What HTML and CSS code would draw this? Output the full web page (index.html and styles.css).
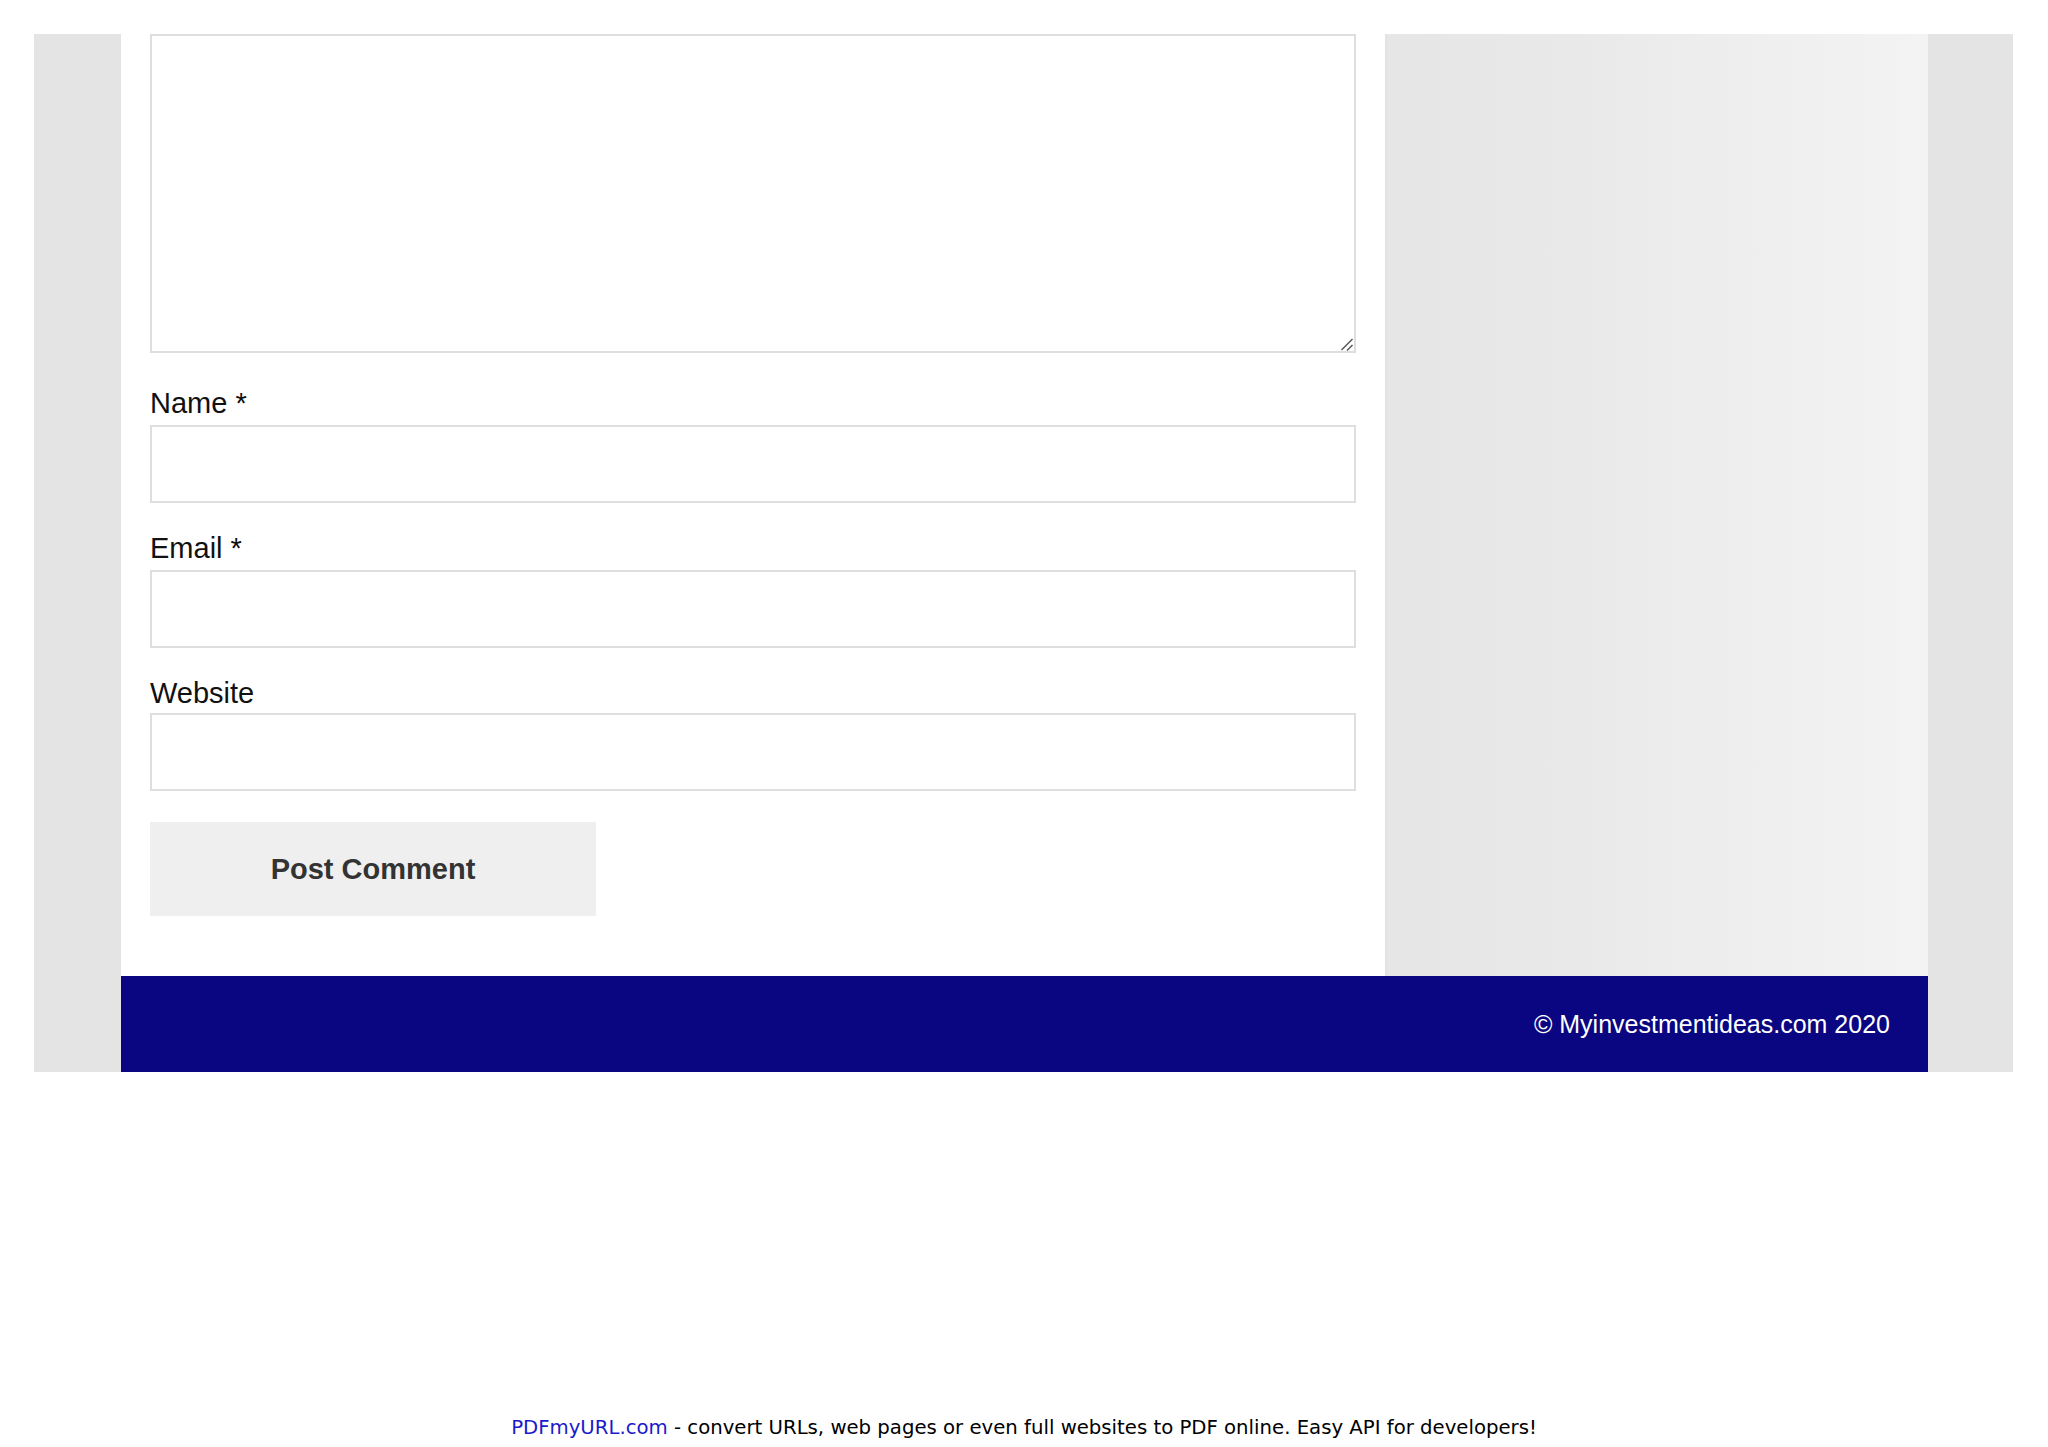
FILE: index.html
```html
<!DOCTYPE html>
<html lang="en">
<head>
<meta charset="utf-8">
<title>Leave a comment</title>
<link rel="stylesheet" href="styles.css">
</head>
<body>
<div class="site">
  <div class="row">
    <main class="content">
      <form class="comment-form">
        <div class="area-wrap">
          <textarea class="comment-area" name="comment"></textarea>
          <svg class="grip" width="14" height="14" viewBox="0 0 14 14" aria-hidden="true">
            <line x1="1.5" y1="13" x2="12.5" y2="2" stroke="#555" stroke-width="1.4"/>
            <line x1="7" y1="13.5" x2="12.5" y2="8" stroke="#555" stroke-width="1.4"/>
          </svg>
        </div>
        <div class="field">
          <label class="field-label" for="author">Name *</label>
          <input class="field-input" id="author" type="text">
        </div>
        <div class="field">
          <label class="field-label" for="email">Email *</label>
          <input class="field-input" id="email" type="text">
        </div>
        <div class="field field-last">
          <label class="field-label" for="url">Website</label>
          <input class="field-input" id="url" type="text">
        </div>
        <div class="form-submit">
          <button class="submit-btn" type="button">Post Comment</button>
        </div>
      </form>
    </main>
    <aside class="sidebar"></aside>
  </div>
  <footer class="site-footer">
    <span class="copyright">© Myinvestmentideas.com 2020</span>
  </footer>
</div>
<p class="pdf-note"><a class="pdf-link" href="#">PDFmyURL.com</a> - convert URLs, web pages or even full websites to PDF online. Easy API for developers!</p>
</body>
</html>
```
FILE: styles.css
```css
html, body {
  margin: 0;
  padding: 0;
  background: #ffffff;
}

body {
  font-family: "Liberation Sans", Arial, sans-serif;
}

.site {
  margin: 34px 35px 0 34px;
  background: #e4e4e4;
  padding: 0 85px 0 87px;
}

.row {
  display: flex;
}

.content {
  width: 1264px;
  box-sizing: border-box;
  background: #ffffff;
  padding: 0 29px 60px 29px;
}

.comment-form {
  display: flex;
  flex-direction: column;
}

.area-wrap {
  position: relative;
  margin: 0 0 33px 0;
}

.comment-area {
  display: block;
  box-sizing: border-box;
  width: 100%;
  height: 319px;
  margin: 0;
  border: 2px solid #dedede;
  background: #ffffff;
  padding: 10px;
  font: inherit;
  resize: none;
}

.grip {
  position: absolute;
  right: 2px;
  bottom: 2px;
  display: block;
}

.field {
  display: flex;
  flex-direction: column;
  margin-bottom: 28px;
}

.field-last .field-label {
  margin-bottom: 2px;
}

.field-label {
  display: block;
  font-family: "Liberation Sans", Arial, sans-serif;
  font-size: 29px;
  line-height: 35px;
  color: #111111;
  margin-bottom: 4px;
}

.field-input {
  display: block;
  box-sizing: border-box;
  width: 100%;
  height: 78px;
  margin: 0;
  border: 2px solid #dedede;
  background: #ffffff;
  padding: 0 14px;
  font: inherit;
  font-size: 29px;
}

.form-submit {
  margin-top: 3px;
}

.submit-btn {
  display: block;
  width: 446px;
  height: 94px;
  margin: 0;
  border: none;
  background: #efefef;
  color: #333333;
  font-family: "Liberation Sans", Arial, sans-serif;
  font-weight: bold;
  font-size: 29px;
  padding: 0;
}

.sidebar {
  width: 543px;
  box-sizing: border-box;
  border-left: 2px solid #e2e2e2;
  background: linear-gradient(to right, #e6e6e6 0%, #e9e9e9 35%, #efefef 70%, #f3f3f3 100%);
}

.site-footer {
  height: 96px;
  background: #0a0580;
  display: flex;
  align-items: center;
  justify-content: flex-end;
  padding-right: 38px;
}

.copyright {
  color: #ffffff;
  font-size: 25px;
  line-height: 30px;
}

.pdf-note {
  margin: 345px 0 0 0;
  text-align: center;
  font-family: "DejaVu Sans", Verdana, sans-serif;
  font-size: 19.7px;
  line-height: 22px;
  color: #000000;
}

.pdf-link {
  color: #1a1acc;
  text-decoration: none;
}
```
